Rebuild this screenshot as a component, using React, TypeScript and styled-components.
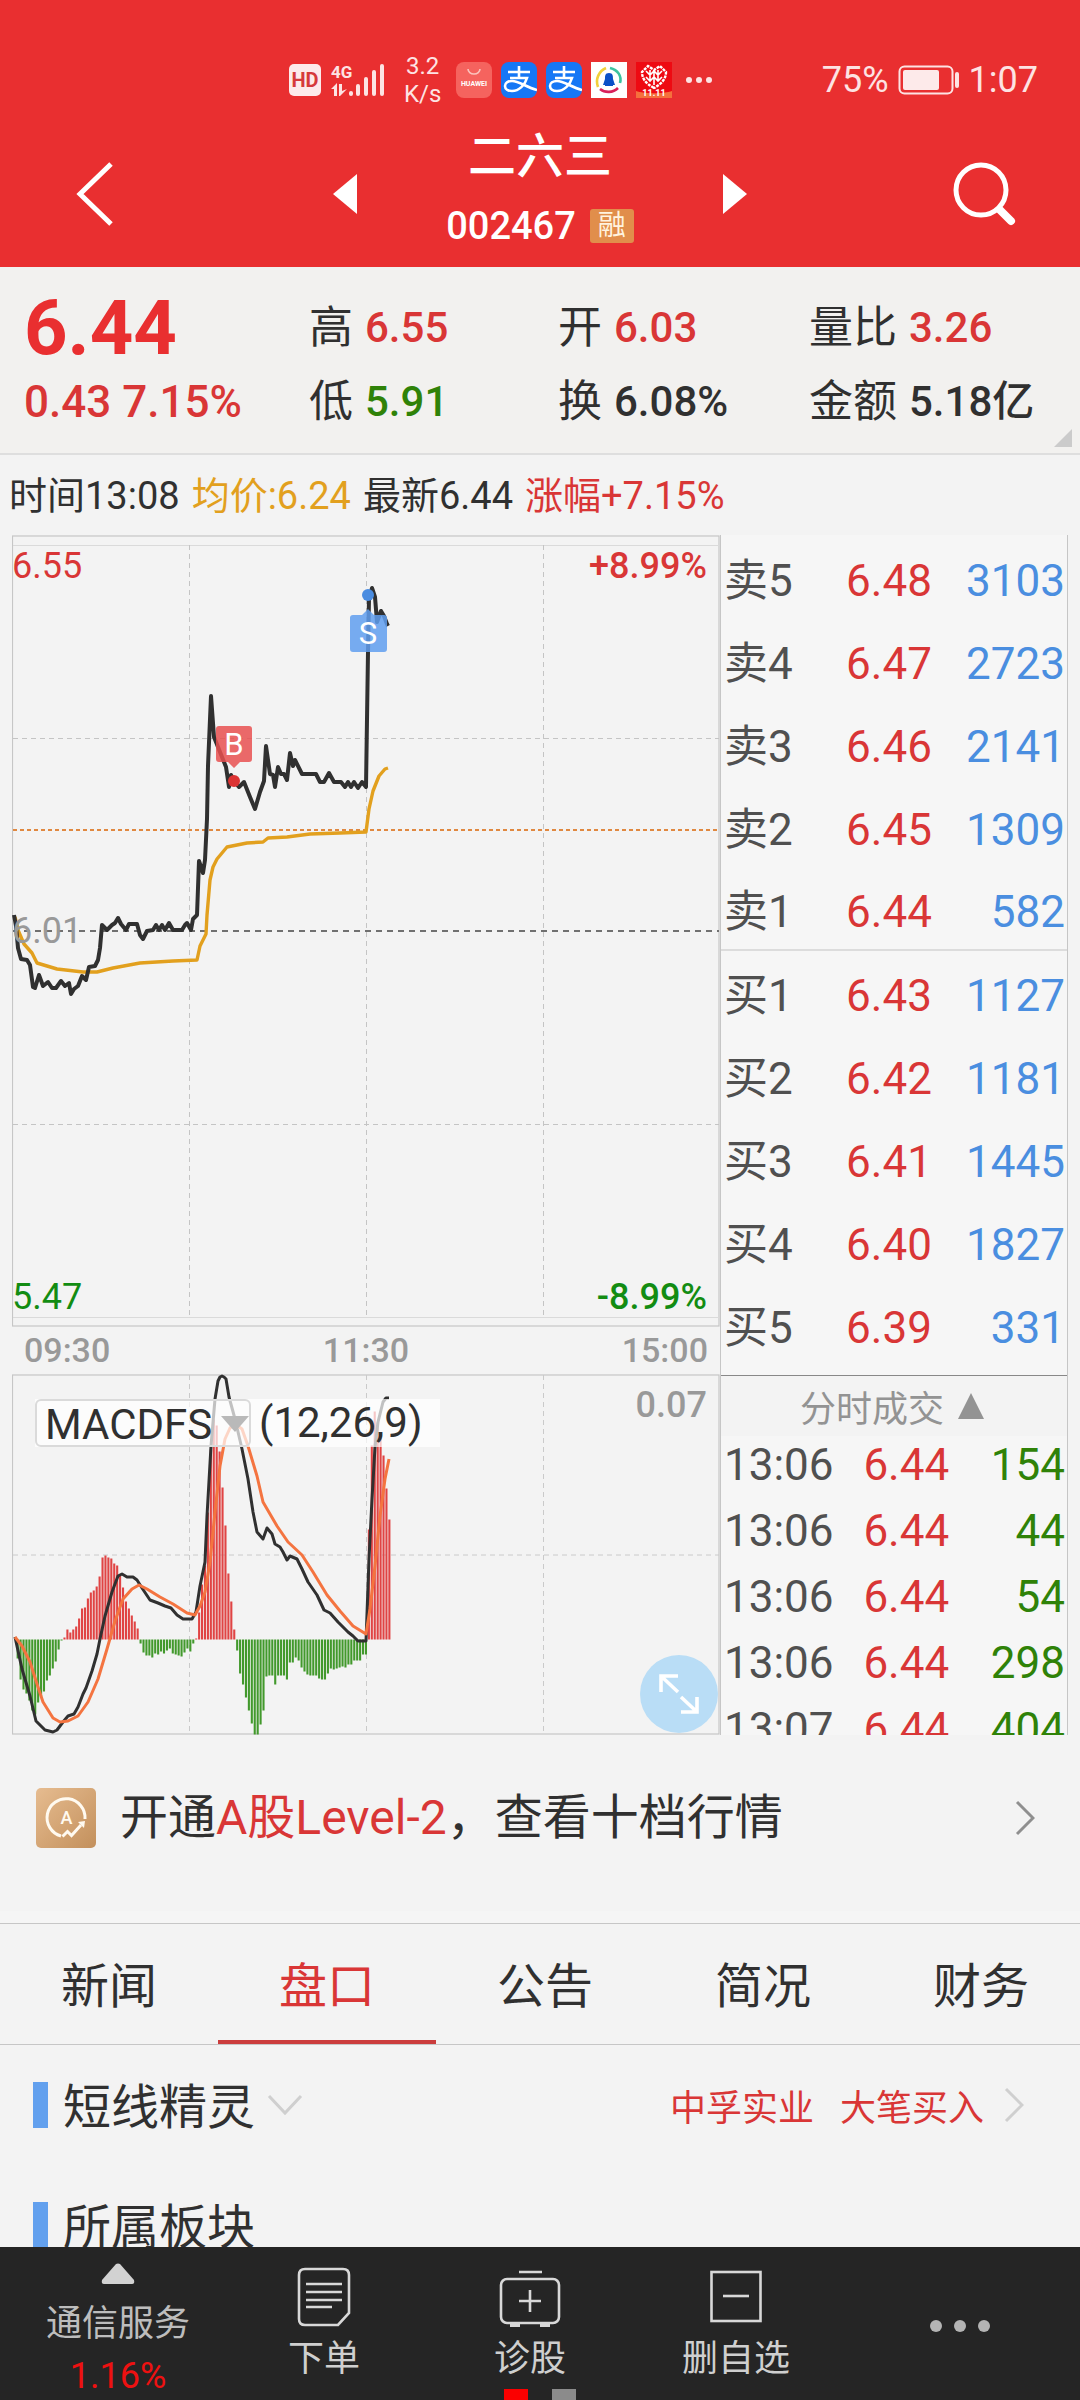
import React from "react";
import styled, { createGlobalStyle } from "styled-components";

const red = "#d93636";
const green = "#2f8208";
const ink = "#303030";
const line = "#c6c6c6";

const GlobalStyle = createGlobalStyle`
  * { box-sizing: border-box; }
  body {
    margin: 0;
    background: #f3f3f3;
    color: ${ink};
    font-family: Roboto, "Noto Sans CJK SC", sans-serif;
  }
  button, select { font: inherit; color: inherit; background: none; border: 0; padding: 0; margin: 0; }
  button { cursor: pointer; }
  a { color: inherit; text-decoration: none; }
  svg { display: block; flex: none; }
  dl, dd, dt, h1, h2, p { margin: 0; font-weight: inherit; }
`;

const Screen = styled.div`
  display: flex;
  flex-direction: column;
  height: 100vh;
`;

const Header = styled.header`
  flex: none;
  background: #e92f30;
  color: #fff;
`;

const StatusBar = styled.div`
  display: flex;
  align-items: center;
  justify-content: space-between;
  height: 120px;
  padding: 40px 42px 0 288px;
  color: #fde3e3;
`;

const StatusGroup = styled.div<{ $gap: number }>`
  display: flex;
  align-items: center;
  gap: ${(p) => p.$gap}px;
  font-size: 36px;
  line-height: 40px;
`;

const Speed = styled.div`
  padding: 0 6px 0 10px;
  font-size: 24px;
  line-height: 28px;
  text-align: center;
`;

const TitleBar = styled.nav`
  display: grid;
  grid-template-columns: 250fr 190fr 200fr 190fr 250fr;
  align-items: center;
  height: 147px;
`;

const IconButton = styled.button<{ $side?: "start" | "end" }>`
  display: flex;
  justify-content: ${(p) => p.$side ?? "center"};
  padding: 20px ${(p) => (p.$side === "end" ? 64 : 0)}px 20px ${(p) => (p.$side === "start" ? 76 : 0)}px;
`;

const StockTitle = styled.div`
  display: flex;
  flex-direction: column;
  align-items: center;
`;

const StockName = styled.h1`
  font-size: 48px;
  font-weight: 500;
  line-height: 64px;
`;

const StockCode = styled.div`
  display: flex;
  align-items: center;
  gap: 14px;
  font-size: 38px;
  font-weight: 500;
  line-height: 74px;
`;

const MarginBadge = styled.span`
  width: 44px;
  height: 34px;
  border-radius: 3px;
  background: #e18e4b;
  font-size: 28px;
  font-weight: 400;
  line-height: 34px;
  text-align: center;
  color: #fff3df;
`;

const Main = styled.main`
  flex: 1;
  min-height: 0;
  overflow: hidden;
`;

const Summary = styled.section`
  position: relative;
  display: grid;
  grid-template-columns: 285fr 249fr 251fr 271fr;
  grid-auto-rows: 74px;
  align-items: center;
  padding: 24px 0 14px 24px;
  border-bottom: 2px solid #dedede;
  background: #f2f1ef;
`;

const LastPrice = styled.strong`
  font-size: 76px;
  font-weight: 700;
  line-height: 74px;
  color: #e92f30;
`;

const Change = styled.span`
  font-size: 44px;
  font-weight: 500;
  line-height: 60px;
  color: ${red};
  white-space: nowrap;
`;

const Stat = styled.dl<{ $color: string }>`
  display: flex;
  align-items: center;
  gap: 12px;
  font-size: 44px;
  line-height: 60px;
  white-space: nowrap;
  dd { color: ${(p) => p.$color}; font-size: 42px; font-weight: 500; }
`;

const Corner = styled.svg`
  position: absolute;
  right: 8px;
  bottom: 6px;
`;

const Readout = styled.p`
  display: flex;
  gap: 12px;
  padding: 2px 0 0 9px;
  font-size: 38px;
  line-height: 78px;
  white-space: nowrap;
`;

const Tint = styled.span<{ $color: string }>`
  color: ${(p) => p.$color};
`;

const Market = styled.section`
  display: grid;
  grid-template-columns: minmax(0, 708fr) minmax(0, 348fr);
  padding: 0 12px;
`;

const ChartArea = styled.div`
  position: relative;
`;

const Plot = styled.svg`
  width: 100%;
  height: auto;
`;

const ChartLabel = styled.span<{ $color: string; $strong?: boolean; $top?: string; $right?: boolean }>`
  position: absolute;
  top: ${(p) => p.$top ?? "10px"};
  ${(p) => (p.$right ? "right: 13px;" : "left: 0;")}
  font-size: 36px;
  font-weight: ${(p) => (p.$strong ? 500 : 400)};
  line-height: 42px;
  color: ${(p) => p.$color};
`;

const TimeAxis = styled.div`
  display: flex;
  justify-content: space-between;
  padding: 0 12px;
  font-size: 34px;
  font-weight: 500;
  line-height: 47px;
  color: #999;
`;

const Indicator = styled.div`
  position: absolute;
  top: 25px;
  left: 23px;
  display: flex;
  align-items: center;
  width: 405px;
  height: 48px;
  background: rgba(255, 255, 255, 0.7);
  font-size: 42px;
  line-height: 48px;
`;

const IndicatorSelect = styled.select`
  width: 216px;
  height: 48px;
  margin-right: 8px;
  padding: 0 0 0 8px;
  appearance: none;
  border: 2px solid #dadada;
  border-radius: 6px;
`;

const SelectArrow = styled.svg`
  position: absolute;
  left: 186px;
  top: 17px;
  pointer-events: none;
`;

const ExpandButton = styled.button`
  position: absolute;
  right: 2px;
  bottom: 2px;
  display: grid;
  place-items: center;
  width: 78px;
  height: 78px;
  border-radius: 50%;
  background: #b9ddf6;
`;

const Depth = styled.div`
  display: flex;
  flex-direction: column;
  border-left: 1px solid ${line};
  border-right: 1px solid ${line};
  background: #f6f6f6;
`;

const QuoteTable = styled.table`
  width: 100%;
  border-collapse: collapse;
  table-layout: fixed;
  font-size: 44px;
  color: #505050;
`;

const QuoteRow = styled.tr<{ $divided?: boolean }>`
  height: 83px;
  border-bottom: ${(p) => (p.$divided ? "2px solid #dcdcdc" : "0")};
`;

const QuoteCell = styled.td<{ $color?: string; $align?: string; $indent?: number }>`
  padding: 8px 2px 0 ${(p) => p.$indent ?? 0}px;
  color: ${(p) => p.$color ?? "inherit"};
  text-align: ${(p) => p.$align ?? "left"};
  line-height: 60px;
  white-space: nowrap;
`;

const TicksButton = styled.button`
  display: flex;
  align-items: center;
  justify-content: center;
  gap: 14px;
  height: 61px;
  margin-top: 10px;
  padding-right: 4px;
  border-top: 1px solid #888;
  background: #f3f3f3;
  font-size: 36px;
  color: #939393;
`;

const TickScroller = styled.div`
  height: 299px;
  overflow: hidden;
`;

const TickRow = styled.tr`
  height: 66px;
`;

const TickCell = styled(QuoteCell)`
  padding-top: 0;
  padding-bottom: 8px;
  line-height: 58px;
`;

const Promo = styled.a`
  display: flex;
  align-items: center;
  height: 188px;
  padding: 0 45px 10px 36px;
  border-bottom: 12px solid #f5f5f5;
`;

const PromoText = styled.span`
  flex: 1;
  padding-left: 24px;
  font-size: 48px;
  line-height: 64px;
  white-space: nowrap;
`;

const Tabs = styled.div`
  display: flex;
  overflow: hidden;
  border-top: 1px solid ${line};
  border-bottom: 1px solid ${line};
`;

const Tab = styled.button<{ $active: boolean }>`
  flex: none;
  width: 218px;
  height: 120px;
  border-bottom: 4px solid ${(p) => (p.$active ? "#cb3d3d" : "transparent")};
  font-size: 48px;
  color: ${(p) => (p.$active ? red : ink)};
`;

const Section = styled.section`
  display: flex;
  align-items: center;
  height: 120px;
  padding: 0 56px 0 33px;
`;

const Marker = styled.i`
  width: 15px;
  height: 46px;
  margin-right: 15px;
  background: #62a0ee;
`;

const SectionTitle = styled.h2`
  margin-right: 12px;
  padding-top: 6px;
  font-size: 48px;
  line-height: 64px;
`;

const Alert = styled.a`
  display: flex;
  align-items: center;
  gap: 26px;
  margin-left: auto;
  font-size: 36px;
  color: ${red};
`;

const AlertChevron = styled.svg`
  margin-left: -6px;
`;

const BottomBar = styled.nav`
  position: relative;
  flex: none;
  display: grid;
  grid-template-columns: 221fr 206fr 206fr 206fr 241fr;
  height: 153px;
  background: #252525;
  color: #cfcfcf;
  font-size: 36px;
`;

const BarButton = styled.button`
  display: flex;
  flex-direction: column;
  align-items: center;
  padding-top: 20px;
  line-height: 52px;
  white-space: nowrap;
  svg { margin-bottom: 6px; }
`;

const SectorButton = styled(BarButton)`
  padding: 16px 0 0 15px;
  color: #bdbdbd;
  svg { margin-bottom: 14px; }
`;

const MoreButton = styled(BarButton)`
  justify-content: center;
  padding-top: 8px;
`;

const Pager = styled.div`
  position: absolute;
  bottom: 0;
  left: 50%;
  display: flex;
  gap: 24px;
  transform: translateX(-50%);
`;

const PagerDot = styled.i<{ $active?: boolean }>`
  width: 24px;
  height: 11px;
  background: ${(p) => (p.$active ? "#fb0000" : "#8b8b8b")};
`;

const price =
  "14,916 16,927 18,949 21,960 27,961 30,966 33,988 35,989 39,976 43,987 48,983 52,989 56,989 61,982 65,987 69,984 71,995 74,990 78,987 82,977 86,981 89,968 95,967 98,961 100,949 102,926 107,931 112,926 115,924 118,919 121,925 126,931 129,925 137,925 140,936 143,940 147,932 153,931 156,926 159,931 162,926 165,931 169,924 173,931 182,931 185,926 187,924 191,931 193,920 197,916 199,862 203,874 205,861 207,820 208,767 211,697 214,738 220,753 226,768 229,788 231,776 234,782 239,788 244,783 250,798 255,810 260,793 264,782 266,747 270,775 273,776 275,788 278,768 281,775 284,775 287,781 290,754 293,767 295,761 302,775 316,775 320,783 324,783 329,774 334,783 341,783 345,788 348,783 351,788 354,783 358,789 362,783 366,788 368,653 369,600 372,589 375,598 377,623 381,612 384,617 387,625 388,627";
const average =
  "15,918 18,931 24,945 32,954 37,964 47,967 57,970 83,973 97,973 113,969 140,964 173,962 197,961 200,947 206,935 207,916 210,881 213,868 217,860 227,848 247,844 263,843 268,839 287,838 310,835 340,834 366,833 369,810 373,792 379,777 385,770 388,769";
const dif =
  "15,1638 22,1670 30,1697 36,1722 45,1731 53,1733 57,1731 63,1723 68,1717 74,1715 78,1708 83,1695 86,1689 92,1672 97,1655 100,1640 105,1617 112,1593 118,1577 122,1575 127,1578 133,1578 137,1581 142,1589 150,1601 158,1604 165,1607 171,1609 177,1616 183,1620 192,1620 196,1613 200,1587 205,1563 207,1517 211,1447 215,1400 218,1382 220,1378 222,1377 224,1378 226,1380 229,1398 235,1420 242,1450 248,1480 253,1513 257,1533 263,1540 267,1529 272,1535 275,1545 280,1548 283,1553 287,1561 290,1557 297,1560 302,1570 308,1583 317,1596 324,1611 330,1614 338,1623 348,1633 353,1637 358,1642 366,1642 369,1560 372,1500 375,1448 378,1423 383,1403 386,1399 389,1399";
const dea =
  "15,1638 22,1647 30,1663 37,1685 43,1703 53,1719 60,1723 68,1722 78,1717 88,1703 98,1680 107,1650 115,1622 123,1600 132,1590 139,1586 147,1590 160,1598 173,1605 187,1614 195,1616 200,1607 205,1593 210,1563 215,1513 220,1467 225,1440 230,1429 235,1425 242,1430 248,1447 257,1477 263,1503 277,1527 288,1543 302,1556 313,1573 327,1596 340,1612 353,1627 366,1635 370,1610 375,1567 380,1517 385,1480 389,1460";
const histogram = [
  -19, -40, -50, -54, -61, -71, -75, -63, -57, -52, -41, -36, -29, -22, -10, -1, 2, 10, 7, 10, 13, 21, 31, 32, 41, 47,
  49, 53, 63, 82, 84, 82, 81, 76, 74, 64, 52, 38, 31, 24, 18, 11, -4, -13, -16, -16, -18, -14, -15, -12, -14, -11, -9,
  -14, -15, -16, -17, -13, -9, -12, -4, 1, 27, 55, 74, 127, 190, 220, 214, 188, 152, 114, 66, 38, 10, -11, -34, -45,
  -58, -71, -84, -95, -95, -85, -71, -37, -36, -36, -45, -36, -36, -36, -40, -23, -23, -18, -21, -28, -32, -35, -36,
  -36, -36, -39, -40, -40, -34, -29, -30, -29, -28, -27, -28, -25, -25, -21, -21, -21, -15, -15, 110, 194, 228, 217,
  207, 184, 151, 120,
];

const orders: [string, string, string][] = [
  ["卖5", "6.48", "3103"],
  ["卖4", "6.47", "2723"],
  ["卖3", "6.46", "2141"],
  ["卖2", "6.45", "1309"],
  ["卖1", "6.44", "582"],
  ["买1", "6.43", "1127"],
  ["买2", "6.42", "1181"],
  ["买3", "6.41", "1445"],
  ["买4", "6.40", "1827"],
  ["买5", "6.39", "331"],
];

const ticks: [string, string, string][] = [
  ["13:06", "6.44", "154"],
  ["13:06", "6.44", "44"],
  ["13:06", "6.44", "54"],
  ["13:06", "6.44", "298"],
  ["13:07", "6.44", "404"],
];

const stats: [string, string, string][] = [
  ["高", "6.55", red],
  ["开", "6.03", red],
  ["量比", "3.26", red],
  ["低", "5.91", green],
  ["换", "6.08%", ink],
  ["金额", "5.18亿", ink],
];

function SignalIcons() {
  return (
    <>
      <svg width="34" height="34" viewBox="0 0 34 34">
        <rect x="1" y="1" width="32" height="32" rx="5" fill="#fdeaea" />
        <text x="17" y="24" fontSize="20" fontWeight="700" textAnchor="middle" fill="#d63a3a">HD</text>
      </svg>
      <svg width="54" height="36" viewBox="0 0 54 36" fill="#fde3e3">
        <text x="0" y="16" fontSize="17" fontWeight="700">4G</text>
        <path d="M0 27 6 21v13H3v-7zM8 22h3v7l5-2-7 7H8z" />
        <rect x="18" y="29" width="4" height="5" rx="2" />
        <rect x="25" y="22" width="4" height="12" rx="2" />
        <rect x="33" y="15" width="4" height="19" rx="2" />
        <rect x="41" y="8" width="4" height="26" rx="2" />
        <rect x="49" y="2" width="4" height="32" rx="2" />
      </svg>
    </>
  );
}

function AlipayIcon() {
  return (
    <svg width="36" height="36" viewBox="0 0 36 36">
      <rect width="36" height="36" rx="8" fill="#1677f5" />
      <g fill="none" stroke="#fff" strokeWidth="2.6">
        <path d="M7 10h22M18 4v12M9 16h17c-2 7-8 13-15 13-4 0-7-2-7-5s3-5 7-5c7 0 14 6 25 9" />
      </g>
    </svg>
  );
}

function AppIcons() {
  return (
    <>
      <svg width="36" height="36" viewBox="0 0 36 36">
        <rect width="36" height="36" rx="8" fill="#f5635e" />
        <path d="M12 7a6 5 0 0 0 12 0" fill="none" stroke="#fbc4bd" strokeWidth="1.6" />
        <text x="18" y="24" fontSize="7" fontWeight="700" textAnchor="middle" fill="#fff">HUAWEI</text>
      </svg>
      <AlipayIcon />
      <AlipayIcon />
      <svg width="36" height="36" viewBox="0 0 36 36">
        <rect width="36" height="36" fill="#fff" />
        <g fill="none" strokeWidth="2.6">
          <path d="M7 25C4 17 8 9 15 6" stroke="#f1cf3b" />
          <path d="M19 6c8 2 12 8 10 15" stroke="#3cc2a0" />
          <path d="M9 27c5 4 13 4 18-1" stroke="#d8205a" />
        </g>
        <path d="M18 11c4 0 4 3 4 6l2 6h-2v1h-8v-1h-2l2-6c0-3 0-6 4-6z" fill="#0a50c8" />
      </svg>
      <svg width="36" height="36" viewBox="0 0 36 36">
        <rect width="36" height="36" fill="#ee0a12" />
        <path d="M0 29c8 3 28 3 36 0v7H0z" fill="#f5703c" />
        <path d="M18 26C9 21 6 16 6 10l6-6 6 4 6-4 6 6c0 6-3 11-12 16z" fill="none" stroke="#fff" strokeWidth="2.4" strokeDasharray="3 1" />
        <path d="M10 9l4 4 4-4 4 4 4-4M10 15l4 4 4-4 4 4 4-4M18 9v14M14 8v12M22 8v12" fill="none" stroke="#fff" strokeWidth="1.6" />
        <text x="18" y="34" fontSize="9" fontWeight="700" textAnchor="middle" fill="#fff">11.11</text>
      </svg>
    </>
  );
}

function Chevron({ color }: { color: string }) {
  return (
    <svg width="20" height="36" viewBox="0 0 20 36" fill="none" stroke={color} strokeWidth="3">
      <path d="M2 2l16 16L2 34" />
    </svg>
  );
}

function PriceChart() {
  return (
    <Plot viewBox="12 536 708 792" fill="none" role="img" aria-label="分时走势">
      <rect x="12.500" y="537" width="706.500" height="790" stroke={line} strokeWidth="1.2" />
      <path d="M13 546.500H719M13 1318.500H719" stroke="#dadada" />
      <path d="M189.5 546V1318M366.500 546V1318M543.500 546V1318M13 739.500H719M13 1125.500H719" stroke="#c4c4c4" strokeDasharray="5 4" />
      <path d="M13 932H719" stroke="#707070" strokeWidth="2" strokeDasharray="6 5" />
      <path d="M13 831H719" stroke="#e08840" strokeWidth="2" strokeDasharray="4 3" />
      <polyline points={average} stroke="#e2a01e" strokeWidth="3.4" strokeLinejoin="round" />
      <polyline points={price} stroke="#303030" strokeWidth="4" strokeLinejoin="round" />
      <circle cx="234" cy="782" r="6" fill="#dc3333" />
      <path d="M219 727h30a3 3 0 0 1 3 3v30a3 3 0 0 1-3 3h-9l-6 6-6-6h-9a3 3 0 0 1-3-3v-30a3 3 0 0 1 3-3z" fill="#e85050" fillOpacity=".85" />
      <circle cx="368" cy="596" r="6" fill="#4a8ce0" />
      <path d="M353 616h9l6-6 6 6h10a3 3 0 0 1 3 3v31a3 3 0 0 1-3 3h-31a3 3 0 0 1-3-3v-31a3 3 0 0 1 3-3z" fill="#5f9eee" fillOpacity=".85" />
      <g fill="#fff" fontSize="31" textAnchor="middle">
        <text x="234" y="756">B</text>
        <text x="368" y="645">S</text>
      </g>
    </Plot>
  );
}

function MacdChart() {
  return (
    <Plot viewBox="12 1375 708 361" fill="none" role="img" aria-label="MACDFS">
      <rect x="12.500" y="1376" width="706.500" height="359" stroke={line} strokeWidth="1.2" />
      <path d="M189.5 1376V1735M366.500 1376V1735M543.500 1376V1735M13 1556H719" stroke="#cacaca" strokeDasharray="5 4" />
      {histogram.map((v, i) => (
        <rect
          key={i}
          x={16.6 + i * 2.927}
          y={v > 0 ? 1640.5 - v : 1640.5}
          width="2.1"
          height={Math.abs(v)}
          fill={v > 0 ? "#e04444" : "#42992c"}
        />
      ))}
      <polyline points={dif} stroke="#303030" strokeWidth="3" strokeLinejoin="round" />
      <polyline points={dea} stroke="#f47440" strokeWidth="3" strokeLinejoin="round" />
    </Plot>
  );
}

export default function App() {
  return (
    <Screen>
      <GlobalStyle />
      <Header>
        <StatusBar>
          <StatusGroup $gap={9}>
            <SignalIcons />
            <Speed>3.2<br />K/s</Speed>
            <AppIcons />
            <svg width="36" height="8" viewBox="0 0 36 8" fill="#fde3e3">
              <circle cx="8" cy="4" r="3" />
              <circle cx="18" cy="4" r="3" />
              <circle cx="28" cy="4" r="3" />
            </svg>
          </StatusGroup>
          <StatusGroup $gap={9}>
            75%
            <svg width="62" height="30" viewBox="0 0 62 30">
              <rect x="1.5" y="1.5" width="53" height="27" rx="5" fill="none" stroke="#fde3e3" strokeWidth="2" />
              <rect x="5" y="5" width="36" height="20" rx="2" fill="#fdeaea" />
              <rect x="57" y="7" width="4" height="16" rx="2" fill="#fde3e3" />
            </svg>
            1:07
          </StatusGroup>
        </StatusBar>
        <TitleBar>
          <IconButton $side="start" aria-label="返回">
            <svg width="38" height="66" viewBox="0 0 38 66" fill="none" stroke="#fff" strokeWidth="5">
              <path d="M35 3L4 33l31 30" />
            </svg>
          </IconButton>
          <IconButton aria-label="上一只">
            <svg width="24" height="40" viewBox="0 0 24 40" fill="#fff"><path d="M24 0v40L0 20z" /></svg>
          </IconButton>
          <StockTitle>
            <StockName>二六三</StockName>
            <StockCode>002467<MarginBadge>融</MarginBadge></StockCode>
          </StockTitle>
          <IconButton aria-label="下一只">
            <svg width="24" height="40" viewBox="0 0 24 40" fill="#fff"><path d="M0 0v40l24-20z" /></svg>
          </IconButton>
          <IconButton $side="end" aria-label="搜索">
            <svg width="64" height="66" viewBox="0 0 64 66" fill="none" stroke="#fff">
              <circle cx="29" cy="29" r="25" strokeWidth="5" />
              <path d="M46 47l3 3" strokeWidth="5" />
              <path d="M48 49l11 11" strokeWidth="8" strokeLinecap="round" />
            </svg>
          </IconButton>
        </TitleBar>
      </Header>

      <Main>
        <Summary>
          <LastPrice>6.44</LastPrice>
          {stats.slice(0, 3).map(([name, value, color]) => (
            <Stat key={name} $color={color}><dt>{name}</dt><dd>{value}</dd></Stat>
          ))}
          <Change>0.43 7.15%</Change>
          {stats.slice(3).map(([name, value, color]) => (
            <Stat key={name} $color={color}><dt>{name}</dt><dd>{value}</dd></Stat>
          ))}
          <Corner width="18" height="18" viewBox="0 0 18 18"><path d="M18 0v18H0z" fill="#cbcbcb" /></Corner>
        </Summary>

        <Readout>
          <span>时间13:08</span>
          <Tint $color="#e2a01e">均价:6.24</Tint>
          <span>最新6.44</span>
          <Tint $color={red}>涨幅+7.15%</Tint>
        </Readout>

        <Market>
          <div>
            <ChartArea>
              <PriceChart />
              <ChartLabel $color={red}>6.55</ChartLabel>
              <ChartLabel $color={red} $strong $right>+8.99%</ChartLabel>
              <ChartLabel $color="#999" $top="calc(50% - 21px)">6.01</ChartLabel>
              <ChartLabel $color="#128c12" $top="calc(100% - 51px)">5.47</ChartLabel>
              <ChartLabel $color="#128c12" $top="calc(100% - 51px)" $strong $right>-8.99%</ChartLabel>
            </ChartArea>
            <TimeAxis><span>09:30</span><span>11:30</span><span>15:00</span></TimeAxis>
            <ChartArea>
              <MacdChart />
              <Indicator>
                <IndicatorSelect aria-label="指标" defaultValue="MACDFS">
                  <option>MACDFS</option>
                </IndicatorSelect>
                <SelectArrow width="28" height="16" viewBox="0 0 28 16"><path d="M0 0h28L14 16z" fill="#b9b9b9" /></SelectArrow>
                (12,26,9)
              </Indicator>
              <ChartLabel $color="#999" $strong $right>0.07</ChartLabel>
              <ExpandButton aria-label="全屏">
                <svg width="42" height="42" viewBox="0 0 42 42" fill="none" stroke="#fff" strokeWidth="3.600">
                  <path d="M20 3H3v16M3 3l17 16M39 24v15H23M39 39L23 24" />
                </svg>
              </ExpandButton>
            </ChartArea>
          </div>

          <Depth>
            <QuoteTable aria-label="五档盘口">
              <colgroup><col width="35%" /><col width="30%" /><col width="35%" /></colgroup>
              <tbody>
                {orders.map(([name, value, volume]) => (
                  <QuoteRow key={name} $divided={name === "卖1"}>
                    <QuoteCell $indent={3}>{name}</QuoteCell>
                    <QuoteCell $color={red} $indent={4}>{value}</QuoteCell>
                    <QuoteCell $color="#4a8ee0" $align="right">{volume}</QuoteCell>
                  </QuoteRow>
                ))}
              </tbody>
            </QuoteTable>
            <TicksButton>
              分时成交
              <svg width="26" height="26" viewBox="0 0 26 26" fill="#939393"><path d="M13 0l13 26H0z" /></svg>
            </TicksButton>
            <TickScroller>
              <QuoteTable aria-label="分时成交">
                <colgroup><col width="40%" /><col width="30%" /><col width="30%" /></colgroup>
                <tbody>
                  {ticks.map(([time, value, volume], i) => (
                    <TickRow key={i}>
                      <TickCell $indent={3}>{time}</TickCell>
                      <TickCell $color={red} $indent={4}>{value}</TickCell>
                      <TickCell $color={green} $align="right">{volume}</TickCell>
                    </TickRow>
                  ))}
                </tbody>
              </QuoteTable>
            </TickScroller>
          </Depth>
        </Market>

        <Promo href="#level2">
          <svg width="60" height="60" viewBox="0 0 60 60">
            <defs>
              <linearGradient id="gold" x1="0" y1="0" x2="1" y2="1">
                <stop offset="0" stopColor="#e6bc90" />
                <stop offset="1" stopColor="#c3905c" />
              </linearGradient>
            </defs>
            <rect width="60" height="60" rx="5" fill="url(#gold)" />
            <path d="M25 48A19 19 0 1 1 49 31M26.500 48.500l5-5 4 4L45 37" fill="none" stroke="#fffaf0" strokeWidth="3" />
            <path d="M49 33l-1 7-6-6z" fill="#fffaf0" />
            <text x="30.500" y="36" fontSize="18" fontWeight="500" textAnchor="middle" fill="#fffaf0">A</text>
          </svg>
          <PromoText>开通<Tint $color={red}>A股Level-2</Tint>，查看十档行情</PromoText>
          <Chevron color="#8f8f8f" />
        </Promo>

        <Tabs role="tablist">
          {["新闻", "盘口", "公告", "简况", "财务"].map((t) => (
            <Tab key={t} role="tab" aria-selected={t === "盘口"} $active={t === "盘口"}>{t}</Tab>
          ))}
        </Tabs>

        <Section>
          <Marker />
          <SectionTitle>短线精灵</SectionTitle>
          <svg width="36" height="22" viewBox="0 0 36 22" fill="none" stroke="#cfcfcf" strokeWidth="3"><path d="M2 2l16 17L34 2" /></svg>
          <Alert href="#alerts">
            <span>中孚实业</span>
            <span>大笔买入</span>
            <AlertChevron width="20" height="36" viewBox="0 0 20 36" fill="none" stroke="#cfcfcf" strokeWidth="3"><path d="M2 2l16 16L2 34" /></AlertChevron>
          </Alert>
        </Section>
        <Section>
          <Marker />
          <SectionTitle>所属板块</SectionTitle>
        </Section>
      </Main>

      <BottomBar>
        <SectorButton>
          <svg width="34" height="21" viewBox="0 0 34 21"><path d="M15 1q2-1 4 0l14 16q1 4-2 4H3q-3 0-2-4z" fill="#d2d2d2" /></svg>
          <span>通信服务</span>
          <Tint $color="#ee1111">1.16%</Tint>
        </SectorButton>
        <BarButton>
          <svg width="54" height="60" viewBox="0 0 54 60" fill="none" stroke="#d8d8d8" strokeWidth="2.600">
            <path d="M8 2h38q6 0 6 6v38L41 58H8q-6 0-6-6V8q0-6 6-6z" />
            <path d="M9 17h36M9 25h36M9 33h36M9 40h26" />
          </svg>
          下单
        </BarButton>
        <BarButton>
          <svg width="62" height="60" viewBox="0 0 62 60" fill="none" stroke="#d8d8d8" strokeWidth="2.600">
            <rect x="2" y="12" width="58" height="44" rx="6" />
            <path d="M20 5h23M31 23v22M20 34h22" />
            <path d="M11 58h10M41 58h10" strokeWidth="4" />
          </svg>
          诊股
        </BarButton>
        <BarButton>
          <svg width="52" height="60" viewBox="0 0 52 60" fill="none" stroke="#d8d8d8" strokeWidth="2.600">
            <rect x="1.500" y="5" width="49" height="49" />
            <path d="M13 29h26" />
          </svg>
          删自选
        </BarButton>
        <MoreButton aria-label="更多">
          <svg width="60" height="12" viewBox="0 0 60 12" fill="#b4b4b4">
            <circle cx="6" cy="6" r="6" />
            <circle cx="30" cy="6" r="6" />
            <circle cx="54" cy="6" r="6" />
          </svg>
        </MoreButton>
        <Pager><PagerDot $active /><PagerDot /></Pager>
      </BottomBar>
    </Screen>
  );
}
